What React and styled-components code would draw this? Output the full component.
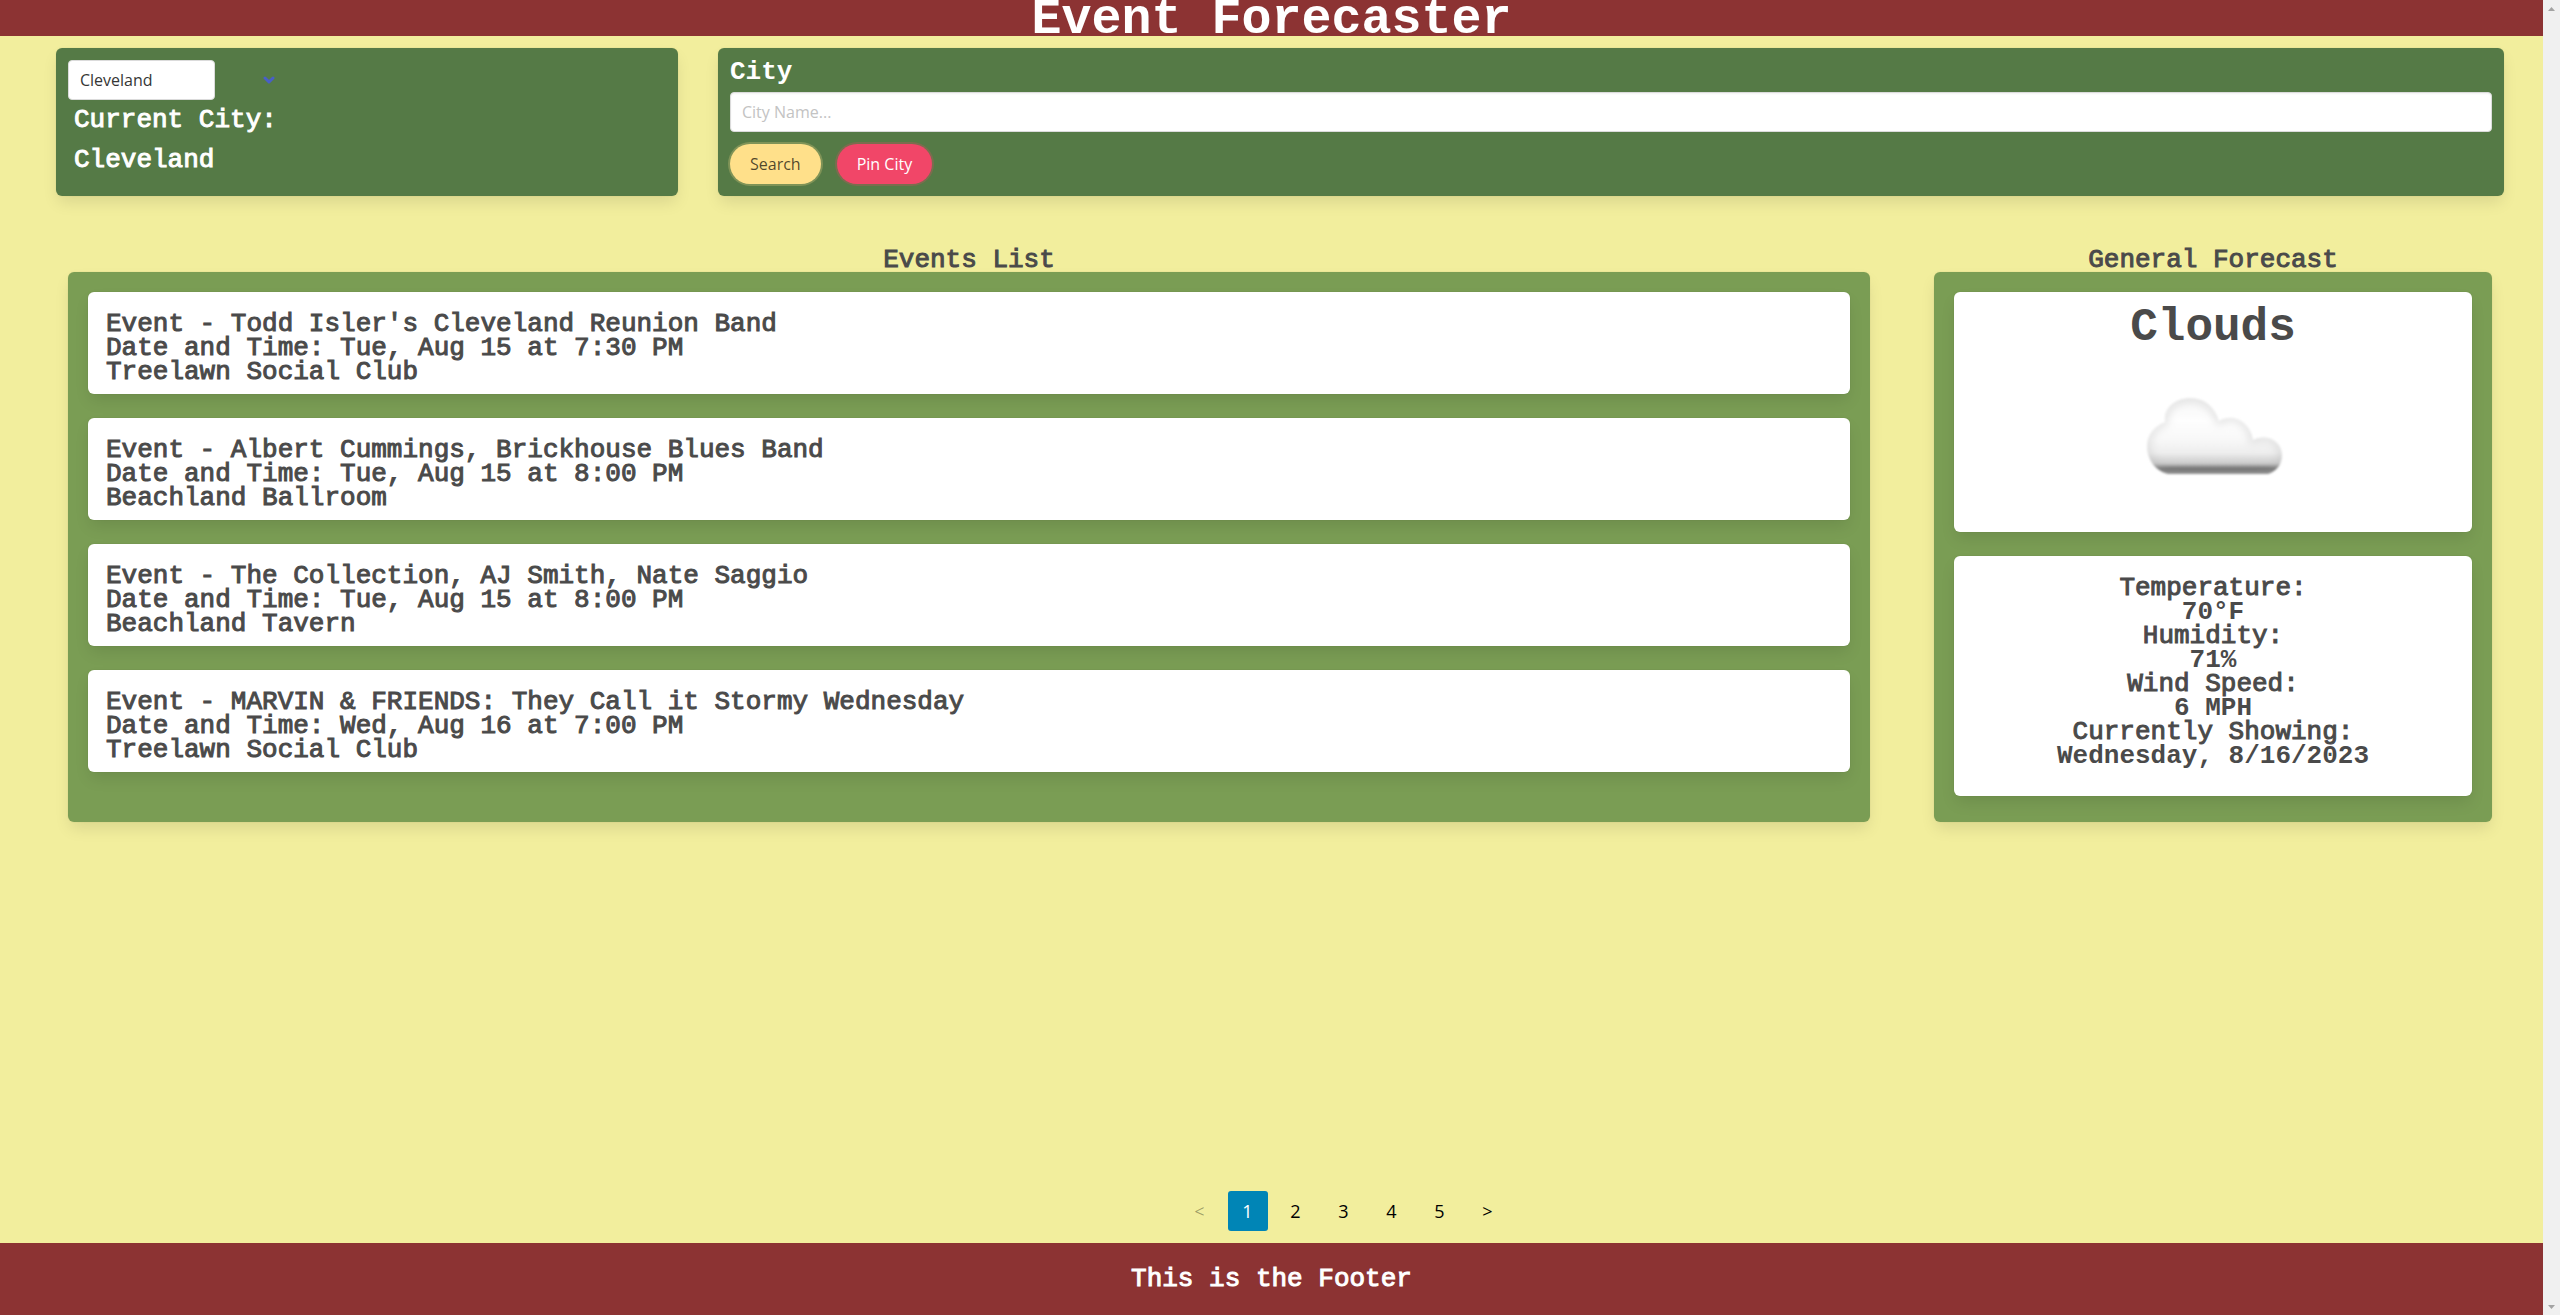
import React, { useState } from "react";
import styled, { createGlobalStyle } from "styled-components";

const pixel = `"Liberation Mono", "Courier New", monospace`;
const sans = `"Open Sans", "Noto Sans", sans-serif`;
const shadow = "0 8px 16px -2px rgba(10,10,10,0.1), 0 0 0 1px rgba(10,10,10,0.02)";

const GlobalStyle = createGlobalStyle`
  *, *::before, *::after { box-sizing: border-box; }
  body { margin: 0; background: #f2ee9d; color: #4a4a4a; font: 26px/24px ${pixel}; -webkit-text-stroke: 1px currentColor; }
  h1, h2, h3, p, ul, dl, dd { margin: 0; padding: 0; font-size: inherit; font-weight: inherit; }
  button, input, select { -webkit-text-stroke: 0; }
`;

const Window = styled.div`
  display: flex;
  min-height: 100vh;
`;

const Page = styled.div`
  flex: 1;
  min-width: 0;
  display: flex;
  flex-direction: column;
`;

const ScrollTrack = styled.div`
  width: 17px;
  flex: none;
  display: flex;
  flex-direction: column;
  justify-content: space-between;
  align-items: center;
  padding: 7px 0 6px;
  background: #f0f0f0;
`;

const Arrow = styled.svg`
  width: 7px;
  height: 4px;
  fill: #a3a3a3;
`;

const Header = styled.header`
  padding-top: 4px;
  background: #8c3333;
  color: #fff;
  text-align: center;
`;

const Title = styled.h1`
  && { font-size: 50px; font-weight: 700; }
  line-height: 32px;
  -webkit-text-stroke: 0;
`;

const SearchRow = styled.section`
  display: grid;
  grid-template-columns: 622fr 1786fr;
  gap: 40px;
  padding: 12px 39px 0 56px;
`;

const Panel = styled.div`
  background: #557a46;
  color: #fff;
  border-radius: 6px;
  padding: 12px;
  box-shadow: ${shadow};
`;

const SelectRow = styled.div`
  display: flex;
  align-items: center;
  gap: 48px;
`;

const Select = styled.select`
  appearance: none;
  width: 147px;
  height: 40px;
  padding: 0 11px;
  border: 1px solid #dbdbdb;
  border-radius: 4px;
  background: #fff;
  color: #363636;
  font: 16px/24px ${sans};
`;

const Chevron = styled.svg`
  width: 12px;
  height: 8px;
  fill: none;
  stroke: #485fc7;
  stroke-width: 3;
  stroke-linecap: round;
  stroke-linejoin: round;
`;

const CurrentCity = styled.div`
  display: grid;
  gap: 16px;
  padding: 8px 6px 12px;
`;

const FieldLabel = styled.label`
  display: block;
  margin-bottom: 8px;
  font-weight: 700;
  -webkit-text-stroke: 0;
`;

const TextInput = styled.input`
  display: block;
  width: 100%;
  height: 40px;
  padding: 0 11px;
  border: 1px solid #dbdbdb;
  border-radius: 4px;
  background: #fff;
  color: #363636;
  font: 16px/24px ${sans};
  box-shadow: inset 0 1px 2px rgba(10, 10, 10, 0.05);
  &::placeholder { color: #c3c3c3; opacity: 1; }
`;

const Buttons = styled.div`
  display: flex;
  gap: 16px;
  margin-top: 12px;
`;

const PillButton = styled.button`
  height: 40px;
  padding: 0 20px;
  border: 0;
  border-radius: 20px;
  font: 16px/24px ${sans};
  background: ${(p) => (p.$danger ? "#f14668" : "#ffe08a")};
  color: ${(p) => (p.$danger ? "#fff" : "rgba(0,0,0,0.7)")};
  box-shadow: 0 0 0 2px ${(p) => (p.$danger ? "rgba(241,70,104,0.25)" : "rgba(255,224,138,0.25)")};
`;

const Main = styled.main`
  display: grid;
  grid-template-columns: 1802fr 558fr;
  gap: 64px;
  padding: 52px 51px 24px 68px;
`;

const Column = styled.section`
  display: flex;
  flex-direction: column;
`;

const Heading = styled.h2`
  text-align: center;
`;

const Board = styled.div`
  flex: 1;
  display: flex;
  flex-direction: column;
  gap: 24px;
  padding: 20px 20px 26px;
  border-radius: 6px;
  background: #7a9d54;
  box-shadow: ${shadow};
`;

const EventCard = styled.article`
  padding: 20px 18px 10px;
  border-radius: 6px;
  background: #fff;
  box-shadow: ${shadow};
`;

const ForecastCard = styled.div`
  min-height: 240px;
  padding: 20px;
  border-radius: 6px;
  background: #fff;
  text-align: center;
  box-shadow: ${shadow};
`;

const Condition = styled.h3`
  && { font-size: 46px; font-weight: 700; }
  line-height: 32px;
  -webkit-text-stroke: 0;
`;

const CloudPicture = styled.svg`
  display: block;
  width: 144px;
  height: 86px;
  margin: 50px auto 0;
`;

const Reading = styled.dd`
  font-weight: 700;
  -webkit-text-stroke: 0;
`;

const Pages = styled.nav`
  display: flex;
  justify-content: center;
  gap: 8px;
  margin-top: auto;
  padding: 0 0 12px 144px;
`;

const PageButton = styled.button`
  width: 40px;
  height: 40px;
  padding: 0;
  border: 0;
  border-radius: 3px;
  font: 18px/24px ${sans};
  background: ${(p) => (p.$active ? "#0085b6" : "transparent")};
  color: ${(p) => (p.$active ? "#fff" : "#000")};
  &:disabled { color: rgba(0, 0, 0, 0.35); }
`;

const Footer = styled.footer`
  padding: 24px;
  background: #8c3333;
  color: #fff;
  text-align: center;
`;

const events = [
  ["Todd Isler's Cleveland Reunion Band", "Tue, Aug 15 at 7:30 PM", "Treelawn Social Club"],
  ["Albert Cummings, Brickhouse Blues Band", "Tue, Aug 15 at 8:00 PM", "Beachland Ballroom"],
  ["The Collection, AJ Smith, Nate Saggio", "Tue, Aug 15 at 8:00 PM", "Beachland Tavern"],
  ["MARVIN & FRIENDS: They Call it Stormy Wednesday", "Wed, Aug 16 at 7:00 PM", "Treelawn Social Club"],
];

const readings = [
  ["Temperature:", "70°F"],
  ["Humidity:", "71%"],
  ["Wind Speed:", "6 MPH"],
  ["Currently Showing:", "Wednesday, 8/16/2023"],
];

const outline =
  "M25 80 C13 77 4 66 4 52 C4 41 11 32 22 28 C20 14 32 4 48 4 C61 4 72 13 76 27 C90 18 108 28 110 46 C126 38 139 49 139 61 C139 70 134 77 125 80 Z";

function Cloud() {
  return (
    <CloudPicture viewBox="-2 0 144 86" role="img" aria-label="Clouds">
      <defs>
        <linearGradient id="body" x1="0" y1="0" x2="0" y2="1">
          <stop offset="0" stopColor="#f6f6f6" />
          <stop offset="0.3" stopColor="#fefefe" />
          <stop offset="0.55" stopColor="#f8f8f8" />
          <stop offset="0.72" stopColor="#eeeeee" />
          <stop offset="0.86" stopColor="#cccccc" />
          <stop offset="0.93" stopColor="#6a6a6a" />
          <stop offset="1" stopColor="#8c8c8c" />
        </linearGradient>
        <filter id="inner" x="-10%" y="-10%" width="120%" height="120%">
          <feGaussianBlur stdDeviation="4" />
        </filter>
        <filter id="edge" x="-10%" y="-10%" width="120%" height="120%">
          <feGaussianBlur stdDeviation="1" />
        </filter>
        <clipPath id="shape">
          <path d={outline} />
        </clipPath>
      </defs>
      <g filter="url(#edge)">
        <path d={outline} fill="url(#body)" />
        <g clipPath="url(#shape)">
          <path d={outline} fill="none" stroke="#b4b4b4" strokeWidth="5" opacity="0.5" filter="url(#inner)" />
        </g>
      </g>
    </CloudPicture>
  );
}

export default function App() {
  const [city, setCity] = useState("Cleveland");
  const [query, setQuery] = useState("");
  const [page, setPage] = useState(1);

  return (
    <>
      <GlobalStyle />
      <Window>
        <Page>
          <Header>
            <Title>Event Forecaster</Title>
          </Header>

          <SearchRow>
            <Panel>
              <SelectRow>
                <Select aria-label="Pinned city" value={city} onChange={(e) => setCity(e.target.value)}>
                  <option>Cleveland</option>
                </Select>
                <Chevron viewBox="0 0 12 8" aria-hidden="true">
                  <path d="M2 2 L6 6 L10 2" />
                </Chevron>
              </SelectRow>
              <CurrentCity>
                <p>Current City:</p>
                <p>{city}</p>
              </CurrentCity>
            </Panel>
            <Panel>
              <FieldLabel htmlFor="city">City</FieldLabel>
              <TextInput
                id="city"
                type="text"
                placeholder="City Name..."
                value={query}
                onChange={(e) => setQuery(e.target.value)}
              />
              <Buttons>
                <PillButton type="button">Search</PillButton>
                <PillButton type="button" $danger>Pin City</PillButton>
              </Buttons>
            </Panel>
          </SearchRow>

          <Main>
            <Column>
              <Heading>Events List</Heading>
              <Board>
                {events.map(([name, time, venue]) => (
                  <EventCard key={name}>
                    <h3>Event - {name}</h3>
                    <p>Date and Time: {time}</p>
                    <p>{venue}</p>
                  </EventCard>
                ))}
              </Board>
            </Column>
            <Column>
              <Heading>General Forecast</Heading>
              <Board>
                <ForecastCard>
                  <Condition>Clouds</Condition>
                  <Cloud />
                </ForecastCard>
                <ForecastCard as="dl">
                  {readings.map(([name, value]) => (
                    <div key={name}>
                      <dt>{name}</dt>
                      <Reading>{value}</Reading>
                    </div>
                  ))}
                </ForecastCard>
              </Board>
            </Column>
          </Main>

          <Pages aria-label="Pages">
            <PageButton type="button" aria-label="Previous" disabled={page === 1} onClick={() => setPage(page - 1)}>
              &lt;
            </PageButton>
            {[1, 2, 3, 4, 5].map((n) => (
              <PageButton key={n} type="button" $active={n === page} onClick={() => setPage(n)}>
                {n}
              </PageButton>
            ))}
            <PageButton type="button" aria-label="Next" disabled={page === 5} onClick={() => setPage(page + 1)}>
              &gt;
            </PageButton>
          </Pages>

          <Footer>This is the Footer</Footer>
        </Page>
        <ScrollTrack aria-hidden="true">
          <Arrow viewBox="0 0 7 4"><path d="M0 4 L3.5 0 L7 4 Z" /></Arrow>
          <Arrow viewBox="0 0 7 4"><path d="M0 0 L3.5 4 L7 0 Z" /></Arrow>
        </ScrollTrack>
      </Window>
    </>
  );
}
